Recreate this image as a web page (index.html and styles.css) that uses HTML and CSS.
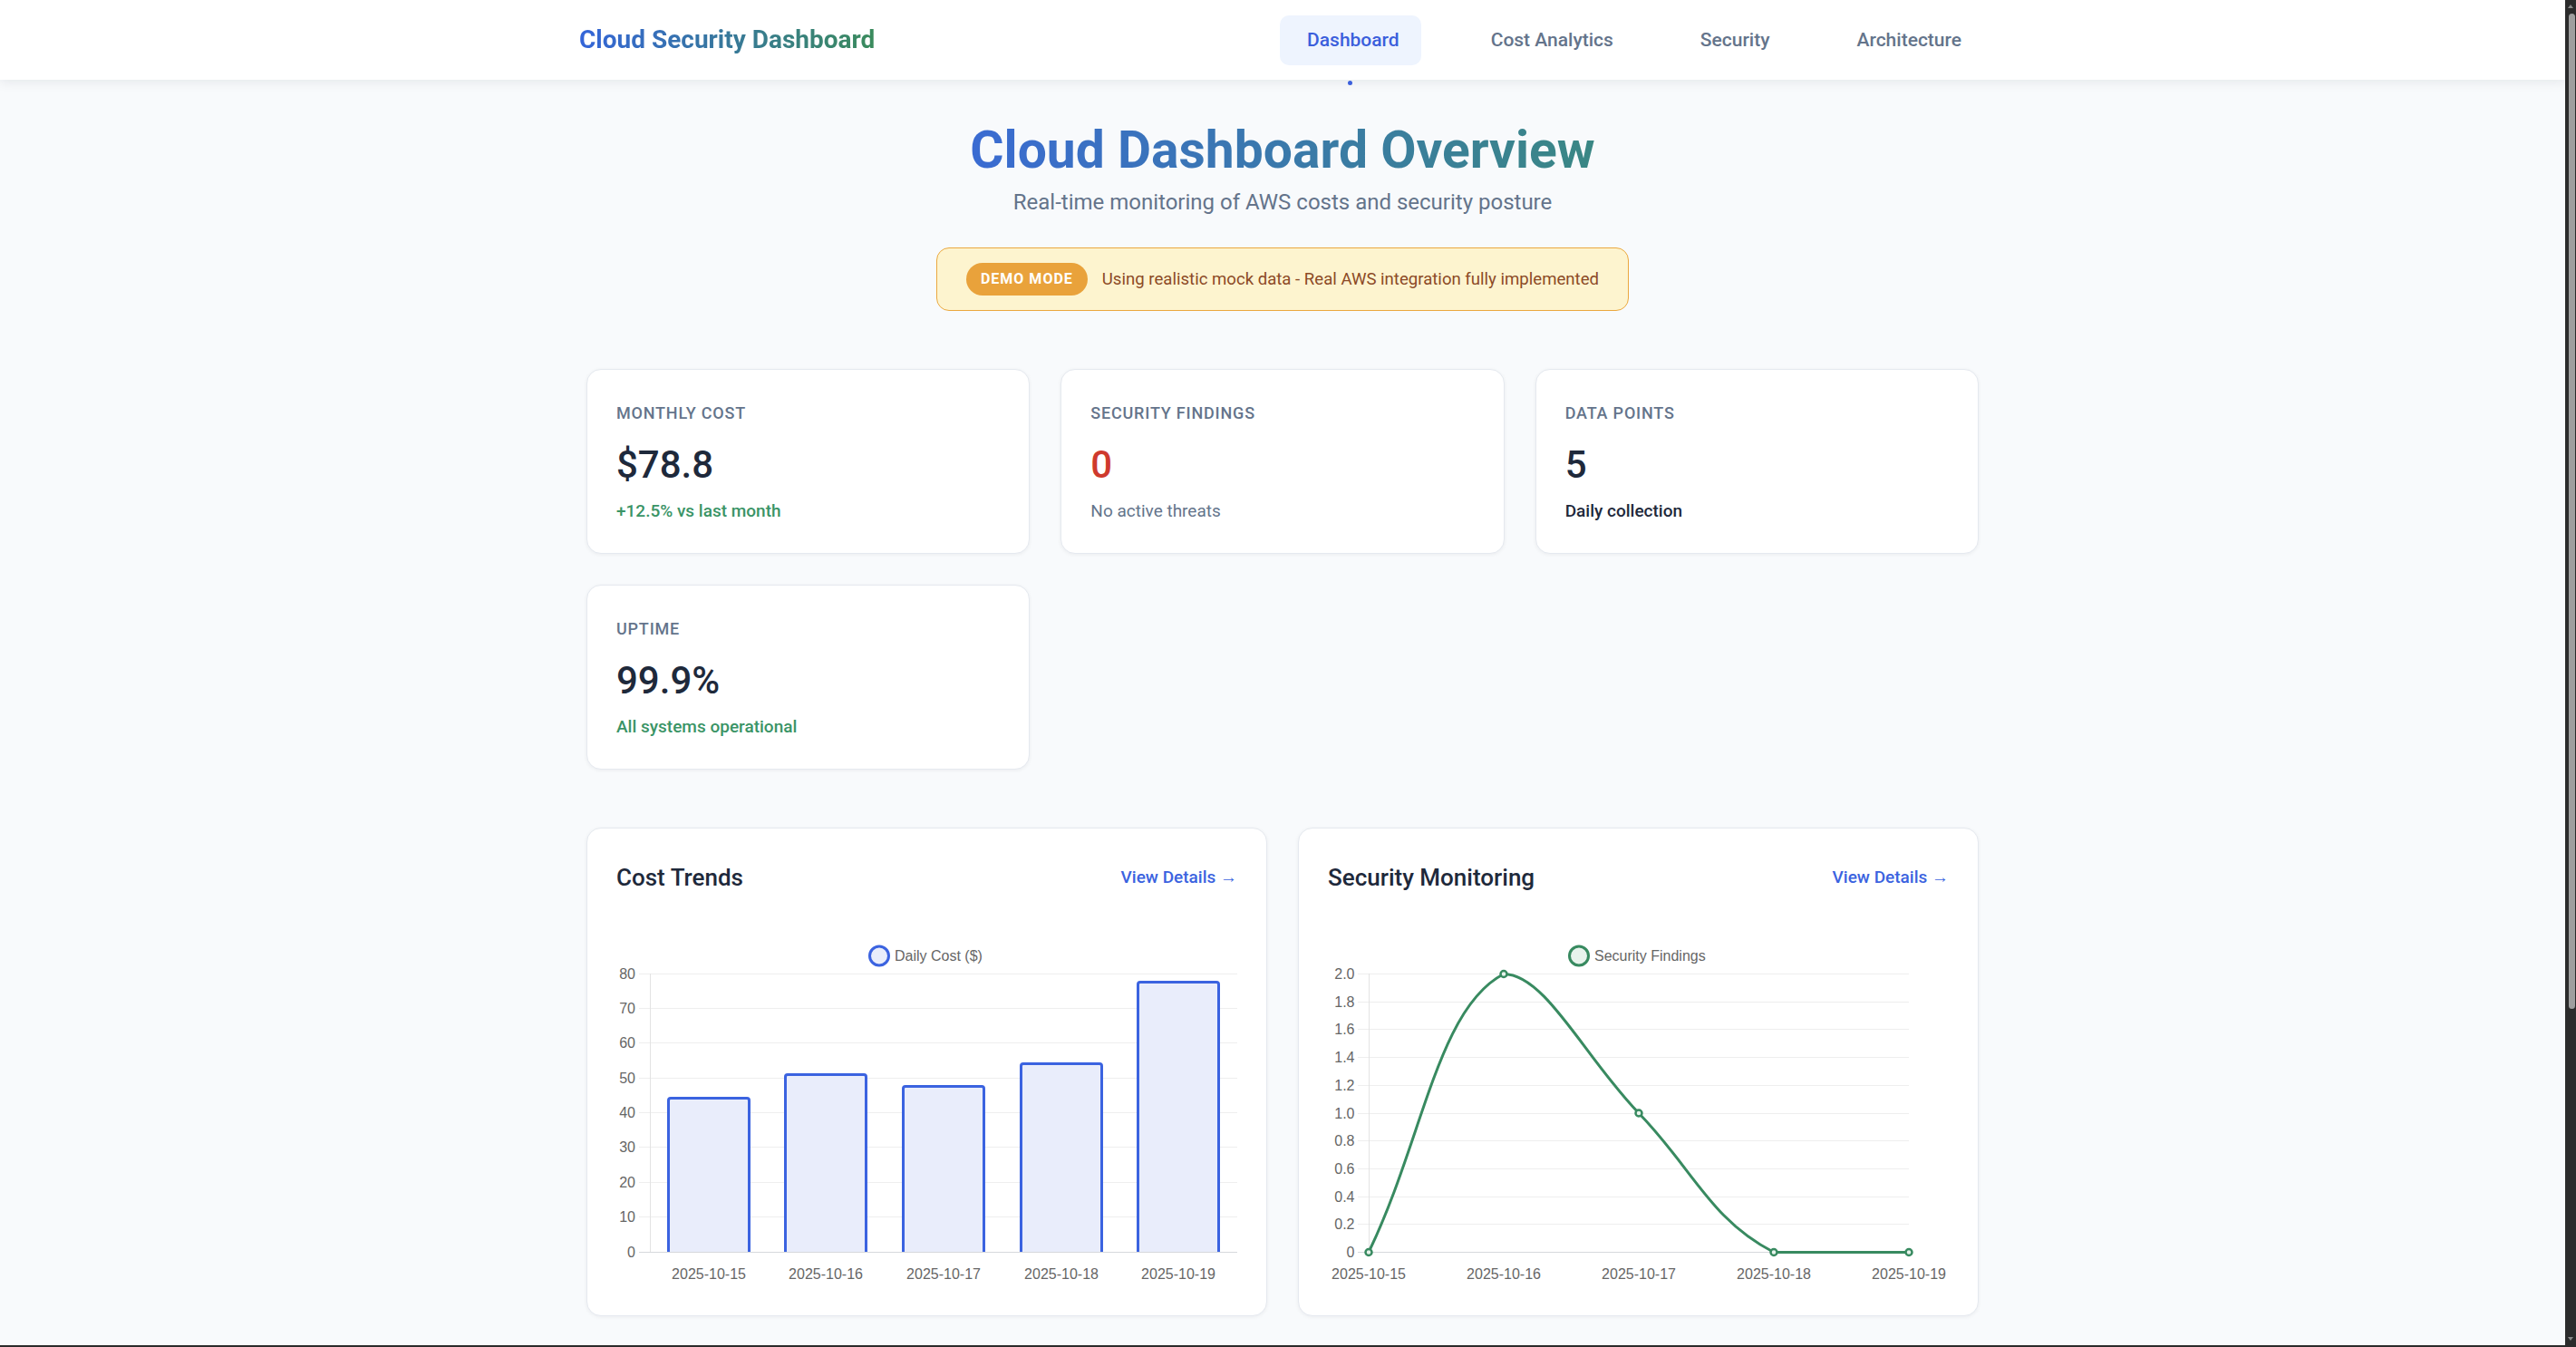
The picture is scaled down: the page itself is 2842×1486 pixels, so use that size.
FILE: index.html
```html
<!DOCTYPE html>
<html lang="en">
<head>
<meta charset="utf-8">
<title>Cloud Security Dashboard</title>
<link rel="stylesheet" href="styles.css">
</head>
<body>
<div class="page">
  <header class="topbar">
    <div class="topbar-inner">
      <div class="brand">Cloud Security Dashboard</div>
      <nav class="nav">
        <a class="nav-link active" href="#">Dashboard</a>
        <a class="nav-link" href="#">Cost Analytics</a>
        <a class="nav-link" href="#">Security</a>
        <a class="nav-link" href="#">Architecture</a>
      </nav>
    </div>
  </header>

  <main class="main">
    <section class="hero">
      <h1 class="hero-title">Cloud Dashboard Overview</h1>
      <p class="hero-sub">Real-time monitoring of AWS costs and security posture</p>
      <div class="demo-banner">
        <span class="demo-badge">DEMO MODE</span>
        <span class="demo-text">Using realistic mock data - Real AWS integration fully implemented</span>
      </div>
    </section>

    <section class="stats">
      <div class="stat-card">
        <div class="stat-label">MONTHLY COST</div>
        <div class="stat-value">$78.8</div>
        <div class="stat-note note-up">+12.5% vs last month</div>
      </div>
      <div class="stat-card">
        <div class="stat-label">SECURITY FINDINGS</div>
        <div class="stat-value danger">0</div>
        <div class="stat-note note-muted">No active threats</div>
      </div>
      <div class="stat-card">
        <div class="stat-label">DATA POINTS</div>
        <div class="stat-value">5</div>
        <div class="stat-note note-dark">Daily collection</div>
      </div>
      <div class="stat-card">
        <div class="stat-label">UPTIME</div>
        <div class="stat-value">99.9%</div>
        <div class="stat-note note-up">All systems operational</div>
      </div>
    </section>

    <section class="charts">
      <div class="chart-card">
        <div class="chart-head">
          <h2 class="chart-title">Cost Trends</h2>
          <a class="chart-link" href="#">View Details →</a>
        </div>
        <svg class="chart-svg" viewBox="0 0 685 400" width="685" height="400">
          <g class="grid">
            <line x1="25" y1="54.5" x2="685" y2="54.5"/>
            <line x1="25" y1="92.5" x2="685" y2="92.5"/>
            <line x1="25" y1="130.5" x2="685" y2="130.5"/>
            <line x1="25" y1="169.5" x2="685" y2="169.5"/>
            <line x1="25" y1="207.5" x2="685" y2="207.5"/>
            <line x1="25" y1="245.5" x2="685" y2="245.5"/>
            <line x1="25" y1="284.5" x2="685" y2="284.5"/>
            <line x1="25" y1="322.5" x2="685" y2="322.5"/>
          </g>
          <line class="axis-y" x1="37.5" y1="54" x2="37.5" y2="361"/>
          <g class="bar-fill">
            <path d="M56,361V194Q56,190 60,190H144Q148,190 148,194V361Z"/>
            <path d="M185,361V168Q185,164 189,164H273Q277,164 277,168V361Z"/>
            <path d="M315,361V181Q315,177 319,177H403Q407,177 407,181V361Z"/>
            <path d="M445,361V156Q445,152 449,152H533Q537,152 537,156V361Z"/>
            <path d="M574,361V66Q574,62 578,62H662Q666,62 666,66V361Z"/>
          </g>
          <g class="bar-stroke">
            <path d="M57.5,361V194Q57.5,191.5 60,191.5H144Q146.5,191.5 146.5,194V361"/>
            <path d="M186.5,361V168Q186.5,165.5 189,165.5H273Q275.5,165.5 275.5,168V361"/>
            <path d="M316.5,361V181Q316.5,178.5 319,178.5H403Q405.5,178.5 405.5,181V361"/>
            <path d="M446.5,361V156Q446.5,153.5 449,153.5H533Q535.5,153.5 535.5,156V361"/>
            <path d="M575.5,361V66Q575.5,63.5 578,63.5H662Q664.5,63.5 664.5,66V361"/>
          </g>
          <line class="axis-x" x1="25" y1="361.5" x2="685" y2="361.5"/>
          <g class="axis-text y-ticks">
            <text x="21" y="60.2">80</text>
            <text x="21" y="98.2">70</text>
            <text x="21" y="136.2">60</text>
            <text x="21" y="175.2">50</text>
            <text x="21" y="213.2">40</text>
            <text x="21" y="251.2">30</text>
            <text x="21" y="290.2">20</text>
            <text x="21" y="328.2">10</text>
            <text x="21" y="367.2">0</text>
          </g>
          <g class="axis-text x-ticks">
            <text x="102" y="391">2025-10-15</text>
            <text x="231" y="391">2025-10-16</text>
            <text x="361" y="391">2025-10-17</text>
            <text x="491" y="391">2025-10-18</text>
            <text x="620" y="391">2025-10-19</text>
          </g>
          <circle class="legend-blue" cx="290" cy="34.5" r="10.5"/>
          <text class="axis-text" x="307" y="40">Daily Cost ($)</text>
        </svg>
      </div>

      <div class="chart-card">
        <div class="chart-head">
          <h2 class="chart-title">Security Monitoring</h2>
          <a class="chart-link" href="#">View Details →</a>
        </div>
        <svg class="chart-svg" viewBox="0 0 685 400" width="685" height="400">
          <g class="grid">
            <line x1="33" y1="54.5" x2="641" y2="54.5"/>
            <line x1="33" y1="85.5" x2="641" y2="85.5"/>
            <line x1="33" y1="115.5" x2="641" y2="115.5"/>
            <line x1="33" y1="146.5" x2="641" y2="146.5"/>
            <line x1="33" y1="177.5" x2="641" y2="177.5"/>
            <line x1="33" y1="208.5" x2="641" y2="208.5"/>
            <line x1="33" y1="238.5" x2="641" y2="238.5"/>
            <line x1="33" y1="269.5" x2="641" y2="269.5"/>
            <line x1="33" y1="300.5" x2="641" y2="300.5"/>
            <line x1="33" y1="330.5" x2="641" y2="330.5"/>
          </g>
          <line class="axis-y" x1="45.5" y1="54" x2="45.5" y2="361"/>
          <line class="axis-x" x1="33" y1="361.5" x2="641" y2="361.5"/>
          <g class="axis-text y-ticks">
            <text x="29.5" y="60.2">2.0</text>
            <text x="29.5" y="91.2">1.8</text>
            <text x="29.5" y="121.2">1.6</text>
            <text x="29.5" y="152.2">1.4</text>
            <text x="29.5" y="183.2">1.2</text>
            <text x="29.5" y="214.2">1.0</text>
            <text x="29.5" y="244.2">0.8</text>
            <text x="29.5" y="275.2">0.6</text>
            <text x="29.5" y="306.2">0.4</text>
            <text x="29.5" y="336.2">0.2</text>
            <text x="29.5" y="367.2">0</text>
          </g>
          <g class="axis-text x-ticks">
            <text x="45" y="391">2025-10-15</text>
            <text x="194" y="391">2025-10-16</text>
            <text x="343" y="391">2025-10-17</text>
            <text x="492" y="391">2025-10-18</text>
            <text x="641" y="391">2025-10-19</text>
          </g>
          <path class="line-green" d="M45,361.5 C104.6,238.7 120.7,92.2 194,54.5 C239.9,54.5 283.4,146.6 343,208 C402.6,269.4 421.7,325.3 492,361.5 C540.9,361.5 581.4,361.5 641,361.5"/>
          <g class="pt-green">
            <circle cx="45" cy="361.5" r="3.5"/>
            <circle cx="194" cy="54.5" r="3.5"/>
            <circle cx="343" cy="208" r="3.5"/>
            <circle cx="492" cy="361.5" r="3.5"/>
            <circle cx="641" cy="361.5" r="3.5"/>
          </g>
          <circle class="legend-green" cx="277" cy="34.5" r="10.5"/>
          <text class="axis-text" x="294" y="40">Security Findings</text>
        </svg>
      </div>
    </section>
  </main>
</div>
<div class="scrollbar" aria-hidden="true"><div class="scrollbar-thumb"></div></div>
</body>
</html>
```

FILE: styles.css
```css
html, body {
  margin: 0;
  padding: 0;
}

body {
  background: #f8fafc;
  font-family: Roboto, "Segoe UI", "Noto Sans", sans-serif;
  color: #1e293b;
}

body::after {
  content: "";
  position: fixed;
  left: 0;
  right: 0;
  bottom: 0;
  height: 2px;
  background: #2b2b2b;
  z-index: 11;
}

/* window scrollbar as seen in the capture */
.scrollbar {
  position: fixed;
  top: 0;
  right: 0;
  bottom: 0;
  width: 12px;
  background: #2b2b2b;
  z-index: 10;
}

.scrollbar::before,
.scrollbar::after {
  content: "";
  position: absolute;
  left: 3px;
  border-left: 3px solid transparent;
  border-right: 3px solid transparent;
}

.scrollbar::before {
  top: 5px;
  border-bottom: 4px solid #8a8a8a;
}

.scrollbar::after {
  bottom: 7px;
  border-top: 4px solid #8a8a8a;
}

.scrollbar-thumb {
  margin: 15px 1px 0 4px;
  height: 1098px;
  background: #9f9f9f;
  border-radius: 4px;
}

.page {
  min-height: 1970px;
  margin-right: 12px;
}

/* ---------- top bar ---------- */
.topbar {
  position: relative;
  z-index: 2;
  height: 88px;
  background: #ffffff;
  box-shadow: 0 3px 12px rgba(15, 23, 42, 0.08);
}

.topbar-inner {
  max-width: 1552px;
  height: 100%;
  margin: 0 auto;
  display: flex;
  align-items: center;
  justify-content: space-between;
}

.brand {
  font-size: 28px;
  font-weight: 700;
  line-height: 36px;
  background: linear-gradient(90deg, #3465d9, #3a8b5c);
  -webkit-background-clip: text;
  background-clip: text;
  color: transparent;
}

.nav {
  display: flex;
  gap: 42px;
}

.nav-link {
  position: relative;
  padding: 11px 27px;
  font-size: 21px;
  line-height: 33px;
  font-weight: 500;
  color: #64748b;
  text-decoration: none;
  border-radius: 10px;
}

.nav-link.active {
  margin-right: 8px;
  padding-left: 30px;
  padding-right: 24px;
  background: #eef4fe;
  color: #3b5fdc;
}

.nav-link.active::after {
  content: "";
  position: absolute;
  left: 50%;
  bottom: -22px;
  width: 5px;
  height: 5px;
  margin-left: -2.5px;
  border-radius: 3px;
  background: #3b5fdc;
}

/* ---------- main ---------- */
.main {
  max-width: 1536px;
  margin: 0 auto;
  padding: 44px 0 64px;
}

.hero {
  display: flex;
  flex-direction: column;
  align-items: center;
  margin-bottom: 64px;
}

.hero-title {
  margin: 0;
  font-size: 57px;
  line-height: 68px;
  font-weight: 700;
  background: linear-gradient(90deg, #3a6bd2, #3a8784);
  -webkit-background-clip: text;
  background-clip: text;
  color: transparent;
}

.hero-sub {
  margin: 5px 0 0;
  font-size: 24px;
  line-height: 36px;
  color: #64748b;
}

.demo-banner {
  margin-top: 32px;
  display: flex;
  align-items: center;
  gap: 16px;
  padding: 16px 32px;
  background: #fdf4cf;
  border: 1px solid #eba83f;
  border-radius: 14px;
}

.demo-badge {
  padding: 8px 16px;
  font-size: 16px;
  line-height: 20px;
  font-weight: 700;
  letter-spacing: 1px;
  color: #ffffff;
  background: #e9a23b;
  border-radius: 18px;
}

.demo-text {
  font-size: 18.6px;
  line-height: 28px;
  color: #8c4a26;
}

/* ---------- stats ---------- */
.stats {
  display: grid;
  grid-template-columns: repeat(3, 1fr);
  gap: 34px;
  margin-bottom: 64px;
}

.stat-card {
  padding: 32px;
  background: #ffffff;
  border: 1px solid #e5e9ef;
  border-radius: 16px;
  box-shadow: 0 1px 4px rgba(15, 23, 42, 0.06);
}

.stat-label {
  font-size: 18px;
  line-height: 32px;
  font-weight: 500;
  letter-spacing: 0.8px;
  color: #64748b;
}

.stat-value {
  margin-top: 16px;
  font-size: 42px;
  line-height: 50px;
  font-weight: 500;
  color: #1e293b;
}

.stat-value.danger {
  color: #cf3a2d;
}

.stat-note {
  margin-top: 12px;
  font-size: 19px;
  line-height: 28px;
  font-weight: 500;
}

.note-up {
  color: #3a9466;
}

.note-muted {
  color: #64748b;
  font-weight: 400;
}

.note-dark {
  color: #1e293b;
}

/* ---------- charts ---------- */
.charts {
  display: grid;
  grid-template-columns: 1fr 1fr;
  gap: 34px;
}

.chart-card {
  padding: 37px 32px 31px;
  background: #ffffff;
  border: 1px solid #e5e9ef;
  border-radius: 16px;
  box-shadow: 0 1px 4px rgba(15, 23, 42, 0.06);
}

.chart-head {
  display: flex;
  align-items: center;
  justify-content: space-between;
  margin-bottom: 35px;
}

.chart-title {
  margin: 0;
  font-size: 26px;
  line-height: 34px;
  font-weight: 500;
  color: #1e293b;
}

.chart-link {
  font-size: 19px;
  line-height: 28px;
  font-weight: 500;
  color: #3b63e0;
  text-decoration: none;
}

.chart-svg {
  display: block;
  width: 685px;
  height: 400px;
}

.grid line {
  stroke: #eeeeee;
  stroke-width: 1;
}

.axis-y {
  stroke: #e3e3e3;
  stroke-width: 1;
}

.axis-x {
  stroke: #d6d8dc;
  stroke-width: 1;
}

.axis-text {
  font-family: "Liberation Sans", Arial, sans-serif;
  font-size: 16px;
  fill: #666666;
}

.y-ticks text {
  text-anchor: end;
}

.x-ticks text {
  text-anchor: middle;
}

.bar-fill path {
  fill: #e9edfb;
}

.bar-stroke path {
  fill: none;
  stroke: #3b63e0;
  stroke-width: 3;
  stroke-linejoin: round;
}

.legend-blue {
  fill: #e9edfb;
  stroke: #3b63e0;
  stroke-width: 3;
}

.legend-green {
  fill: #e8f3ec;
  stroke: #388a60;
  stroke-width: 3;
}

.line-green {
  fill: none;
  stroke: #388a60;
  stroke-width: 3;
  stroke-linecap: round;
}

.pt-green circle {
  fill: #e8f3ec;
  stroke: #388a60;
  stroke-width: 2.5;
}
```
